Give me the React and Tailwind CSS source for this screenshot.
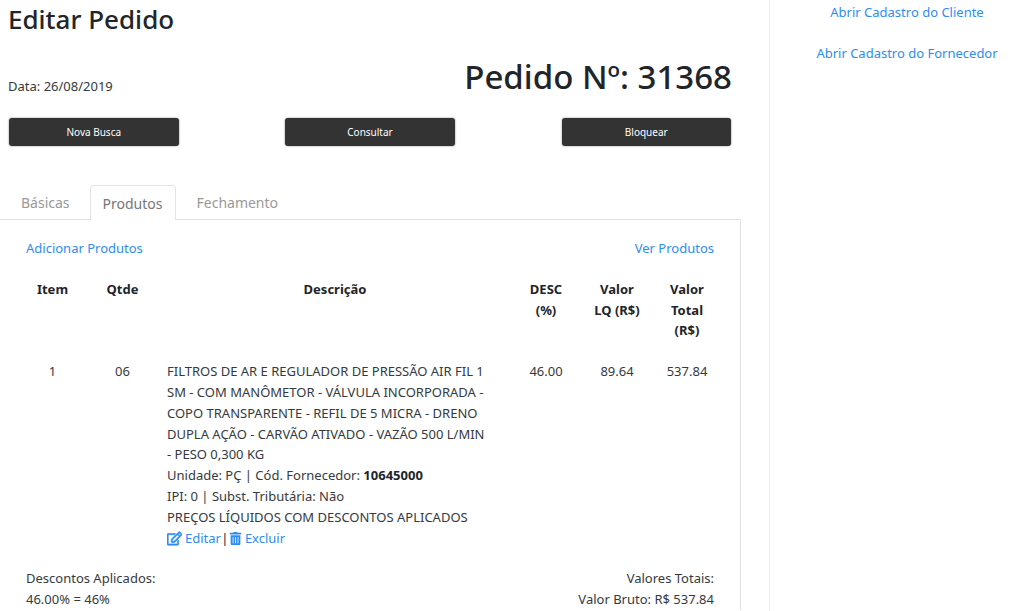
import { FaRegEdit, FaTrashAlt } from "react-icons/fa";

const buttons = ["Nova Busca", "Consultar", "Bloquear"];

const DarkButton = ({ label }) => (
  <button className="w-[169.5px] h-7 rounded-[3px] bg-[#333333] text-white text-[10px] shadow-[0_0_2px_rgba(0,0,0,0.5)]">
    {label}
  </button>
);

const App = () => {
  return (
    <div className="h-screen overflow-hidden flex bg-white text-[#343a40] text-[13px] leading-[20.8px] font-['Noto_Sans',sans-serif]">
      <main className="w-[770px] shrink-0 border-r border-[#eeeeee]">
        <div className="w-[741px]">
          <h1 className="pl-2 pt-[2px] text-[26px] leading-[34px] font-medium text-[#212529]">
            Editar Pedido
          </h1>

          <div className="flex items-end justify-between pl-2 pr-[9px] mt-[20px]">
            <span className="mb-[1px] text-[#343a40]">Data: 26/08/2019</span>
            <span className="text-[33px] leading-[42px] font-medium text-[#212529]">
              Pedido Nº: 31368
            </span>
          </div>

          <div className="flex justify-between pl-[9px] pr-[10px] mt-[20px]">
            {buttons.map((label) => (
              <DarkButton key={label} label={label} />
            ))}
          </div>

          <div className="flex pl-[9px] mt-[39px] h-[35px] border-b border-[#dee2e6] text-[14px] text-[#999999]">
            <span className="px-3 pt-2 mr-2">Básicas</span>
            <span className="px-3 pt-2 -mb-px bg-white border border-b-0 border-[#e4e4e4] rounded-t text-[#777777]">
              Produtos
            </span>
            <span className="px-[21px] pt-2">Fechamento</span>
          </div>

          <div className="border-r border-[#dee2e6] pl-[26px] pr-[26px] pt-[18px]">
            <div className="flex justify-between text-[#2f8cf0]">
              <a>Adicionar Produtos</a>
              <a>Ver Produtos</a>
            </div>

            <table className="table-fixed w-[688px] mt-[20px] border-collapse">
              <colgroup>
                <col className="w-[53px]" />
                <col className="w-[87px]" />
                <col className="w-[352px]" />
                <col className="w-[56px]" />
                <col className="w-[86px]" />
                <col className="w-[54px]" />
              </colgroup>
              <thead>
                <tr className="text-[#212529] align-top">
                  <th className="pb-5 font-bold">Item</th>
                  <th className="pb-5 font-bold">Qtde</th>
                  <th className="pb-5 pr-[14px] font-bold">Descrição</th>
                  <th className="pb-5 font-bold">
                    DESC
                    <br />
                    (%)
                  </th>
                  <th className="pb-5 font-bold">
                    Valor
                    <br />
                    LQ (R$)
                  </th>
                  <th className="pb-5 font-bold">
                    Valor
                    <br />
                    Total
                    <br />
                    (R$)
                  </th>
                </tr>
              </thead>
              <tbody>
                <tr className="align-top text-center">
                  <td>1</td>
                  <td>06</td>
                  <td className="pl-[1px] pr-[29px] text-left">
                    FILTROS DE AR E REGULADOR DE PRESSÃO AIR FIL 1 SM - COM
                    MANÔMETOR - VÁLVULA INCORPORADA - COPO TRANSPARENTE - REFIL
                    DE 5 MICRA - DRENO DUPLA AÇÃO - CARVÃO ATIVADO - VAZÃO 500
                    L/MIN - PESO 0,300 KG
                    <br />
                    Unidade: PÇ | Cód. Fornecedor:{" "}
                    <b className="text-[#212529]">10645000</b>
                    <br />
                    IPI: 0 | Subst. Tributária: Não
                    <br />
                    PREÇOS LÍQUIDOS COM DESCONTOS APLICADOS
                    <br />
                    <span className="text-[#2f8cf0]">
                      <FaRegEdit className="inline mb-[2px] mr-[3px] text-[15px] stroke-[24]" />
                      Editar
                    </span>{" "}
                    <span className="text-[#212529] -ml-[3px]">|</span>{" "}
                    <span className="text-[#2f8cf0] -ml-[3px]">
                      <FaTrashAlt className="inline mb-[2px] mr-[3px] text-[13px]" />
                      Excluir
                    </span>
                  </td>
                  <td>46.00</td>
                  <td>89.64</td>
                  <td>537.84</td>
                </tr>
              </tbody>
            </table>

            <div className="flex justify-between mt-5">
              <div>
                Descontos Aplicados:
                <br />
                46.00% = 46%
              </div>
              <div className="text-right">
                Valores Totais:
                <br />
                Valor Bruto: R$ 537.84
              </div>
            </div>
          </div>
        </div>
      </main>

      <aside className="flex-1 flex flex-col items-center gap-[20.2px] pt-[2px] pl-[20px] text-[#2f8cf0]">
        <a>Abrir Cadastro do Cliente</a>
        <a>Abrir Cadastro do Fornecedor</a>
      </aside>
    </div>
  );
};

export default App;
